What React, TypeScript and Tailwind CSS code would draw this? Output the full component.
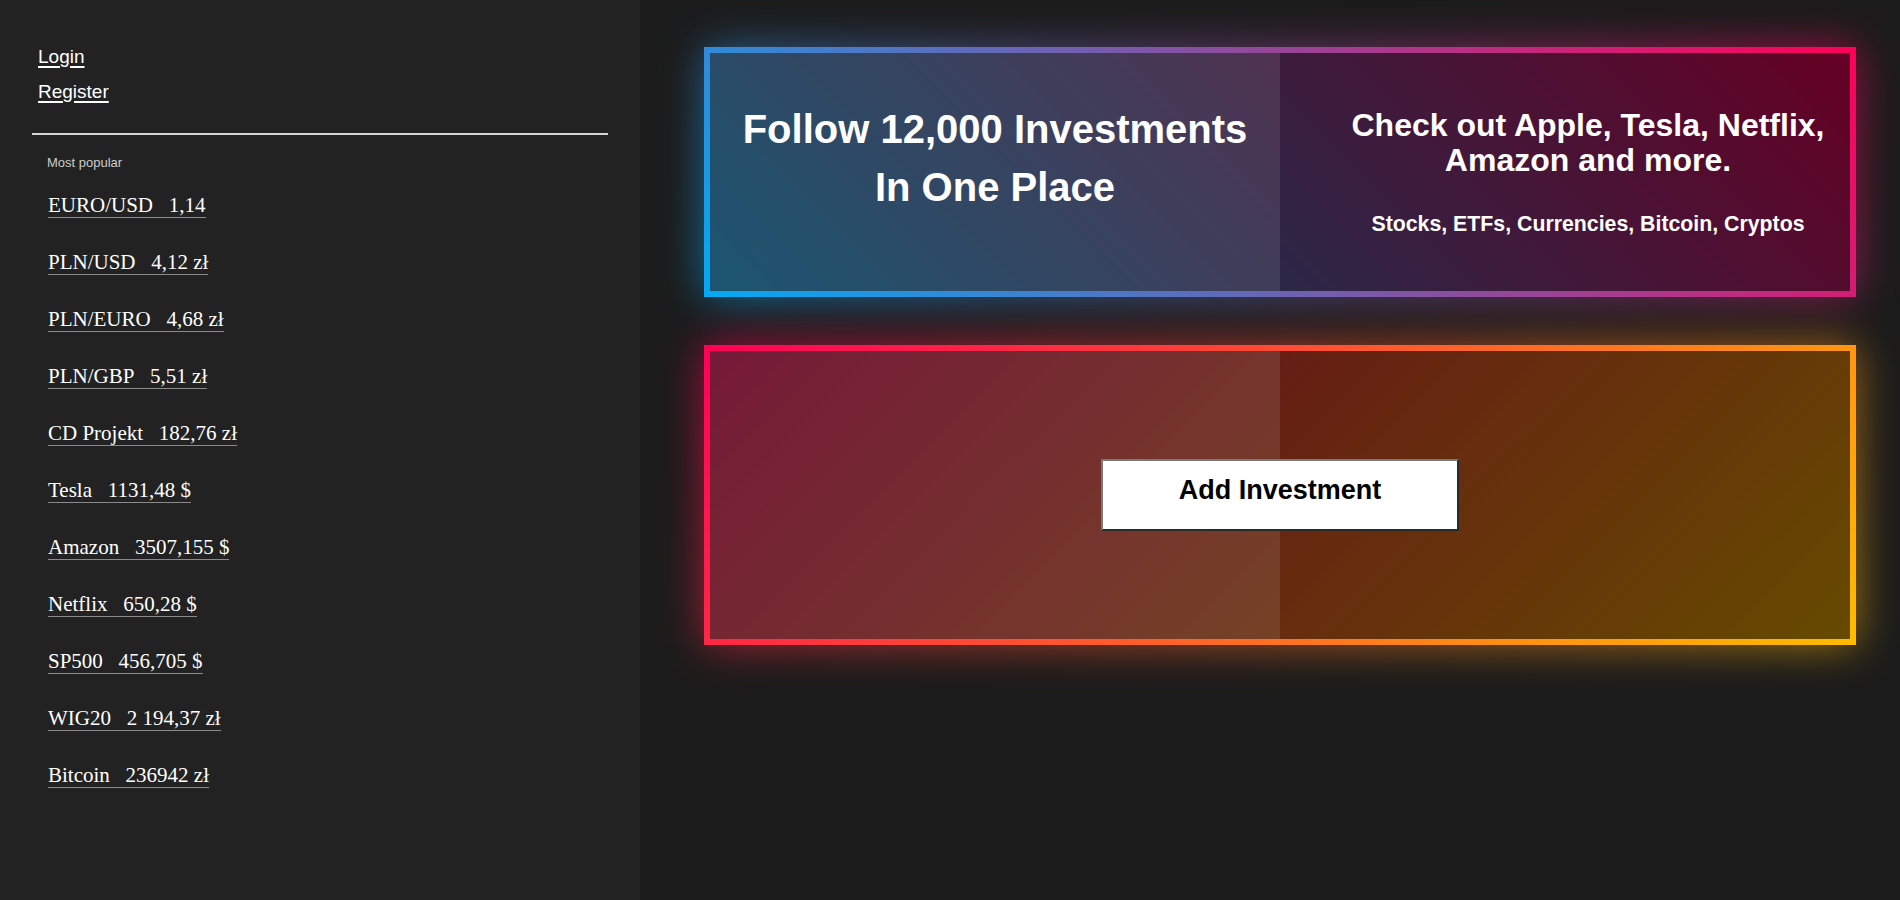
import React from "react";

const popular = [
  { name: "EURO/USD", value: "1,14" },
  { name: "PLN/USD", value: "4,12 zł" },
  { name: "PLN/EURO", value: "4,68 zł" },
  { name: "PLN/GBP", value: "5,51 zł" },
  { name: "CD Projekt", value: "182,76 zł" },
  { name: "Tesla", value: "1131,48 $" },
  { name: "Amazon", value: "3507,155 $" },
  { name: "Netflix", value: "650,28 $" },
  { name: "SP500", value: "456,705 $" },
  { name: "WIG20", value: "2 194,37 zł" },
  { name: "Bitcoin", value: "236942 zł" },
];

const Sidebar: React.FC = () => {
  return (
    <aside className="w-[640px] shrink-0 bg-[#222222] px-[32px] pt-[39px]">
      <nav className="flex flex-col items-start pl-[6px] text-[19px] leading-[35px] text-white">
        <a href="#" className="underline decoration-[1.5px] underline-offset-[3px]">
          Login
        </a>
        <a href="#" className="underline decoration-[1.5px] underline-offset-[3px]">
          Register
        </a>
      </nav>

      <div className="mt-[24px] h-[2px] w-[576px] bg-[#d4d4d4]" />

      {/* Most popular */}
      <p className="mt-[20px] pl-[15px] text-[13px] leading-[15px] text-[#cccccc]">Most popular</p>

      <ul className="mt-[23px] flex flex-col items-start gap-[32px] pl-[16px] font-['Liberation_Serif','Times_New_Roman',serif] text-[21px] leading-[24px] text-white">
        {popular.map((item) => (
          <li key={item.name} className="inline-block border-b border-[#8a8a8a]">
            {item.name}
            {"\u00a0\u00a0\u00a0"}
            {item.value}
          </li>
        ))}
      </ul>
    </aside>
  );
};

interface GlowBoxProps {
  gradient: string;
  height: string;
  children: React.ReactNode;
}

const GlowBox: React.FC<GlowBoxProps> = ({ gradient, height, children }) => {
  return (
    <div className={`relative w-[1152px] ${height}`}>
      <div className={`absolute inset-0 opacity-60 blur-[22px] ${gradient}`} />
      <div className={`relative h-full p-[6px] ${gradient}`}>
        <div className="h-full bg-black/60">{children}</div>
      </div>
    </div>
  );
};

export default function App() {
  return (
    <div className="flex h-[900px] w-full font-['Liberation_Sans',Arial,sans-serif]">
      <Sidebar />

      <main className="flex-1 bg-[#1b1b1b] pl-[64px] pt-[47px]">
        <div className="flex flex-col gap-[48px]">
          <GlowBox gradient="bg-[linear-gradient(45deg,#03a9f4,#ff0058)]" height="h-[250px]">
            <div className="grid h-full grid-cols-2 text-center font-bold text-white">
              <div className="bg-white/10 pt-[47px]">
                <h1 className="text-[40px] leading-[58px]">
                  Follow 12,000 Investments
                  <br />
                  In One Place
                </h1>
              </div>
              <div className="pl-[46px] pt-[55px]">
                <h2 className="text-[32px] leading-[35px]">
                  Check out Apple, Tesla, Netflix,
                  <br />
                  Amazon and more.
                </h2>
                <p className="mt-[34px] text-[21.3px] leading-[24px]">
                  Stocks, ETFs, Currencies, Bitcoin, Cryptos
                </p>
              </div>
            </div>
          </GlowBox>

          <GlowBox gradient="bg-[linear-gradient(135deg,#ff0058,#ffbc00)]" height="h-[300px]">
            <div className="grid h-full grid-cols-2 grid-rows-1">
              <div className="col-start-1 row-start-1 bg-white/10" />
              <div className="col-start-2 row-start-1" />
              <button className="col-span-2 col-start-1 row-start-1 h-[72px] w-[358px] place-self-center border-2 border-t-[#7a7a7a] border-l-[#7a7a7a] border-r-[#2a2a2a] border-b-[#2a2a2a] bg-white pb-[10px] text-[27px] font-bold text-black">
                Add Investment
              </button>
            </div>
          </GlowBox>
        </div>
      </main>
    </div>
  );
}
